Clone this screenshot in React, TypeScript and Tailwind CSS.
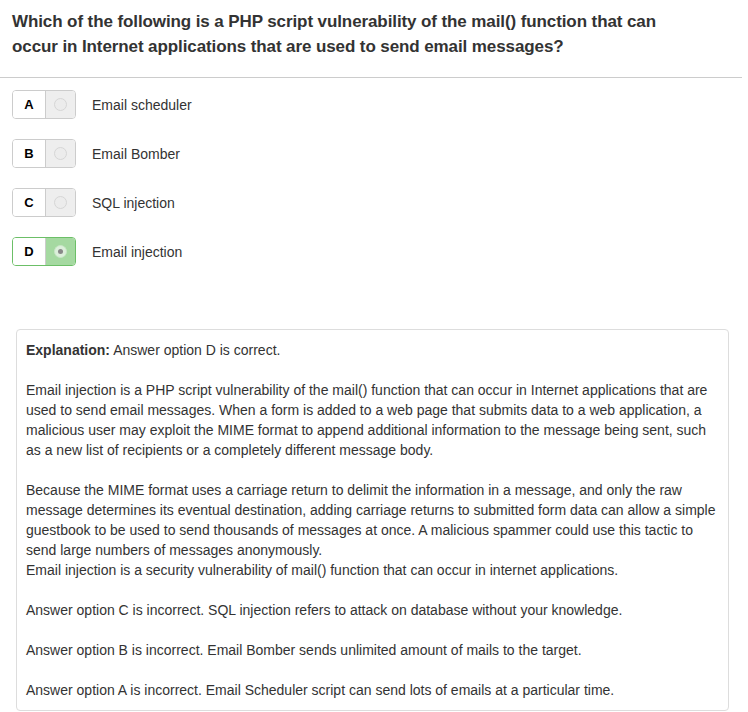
import React from "react";

const options = [
  { l: "A", t: "Email scheduler", sel: false },
  { l: "B", t: "Email Bomber", sel: false },
  { l: "C", t: "SQL injection", sel: false },
  { l: "D", t: "Email injection", sel: true },
];

export default function App() {
  return (
    <div className="w-[748px] h-[712px] bg-white text-[#333] overflow-hidden" style={{ fontFamily: '"Liberation Sans", Arial, sans-serif' }}>
      <div className="pl-[12px] pt-[9px] pr-4">
        <h4 className="text-[17px] tracking-[-0.1px] font-bold leading-[25px] text-[#333]">
          Which of the following is a PHP script vulnerability of the mail() function that can<br />occur in Internet applications that are used to send email messages?
        </h4>
      </div>
      <div className="mt-[18px] h-px w-[742px] bg-[#ccc]" />
      <div className="pl-[12px] pt-[12px] flex flex-col gap-[20px]">
        {options.map((o) => (
          <div key={o.l} className="flex items-center h-[29px]">
            <div className={`flex h-[29px] w-[64px] rounded-[4px] border ${o.sel ? "border-[#6cbf67]" : "border-[#ccc]"} overflow-hidden`}>
              <div className="w-[33px] bg-white flex items-center justify-center text-[13px] font-bold text-black border-r border-[#ccc]">
                {o.l}
              </div>
              <div className={`flex-1 flex items-center justify-center ${o.sel ? "bg-[#a5d9a1]" : "bg-[#eee]"}`}>
                <div className={`w-[13px] h-[13px] rounded-full border ${o.sel ? "border-[#c8e6c6] bg-[#dcefdb]" : "border-[#d6d6d6] bg-[#ececec]"} flex items-center justify-center`}>
                  {o.sel && <div className="w-[5px] h-[5px] rounded-full bg-[#888]" />}
                </div>
              </div>
            </div>
            <div className="ml-[16px] text-[14px] leading-[20px]">{o.t}</div>
          </div>
        ))}
      </div>
      <div className="ml-[16px] mt-[63px] w-[713px] h-[382px] border border-[#ddd] rounded-[4px] px-[9px] pt-[10px] text-[14px] leading-[20px]">
        <p><b>Explanation:</b> Answer option D is correct.</p>
        <p className="mt-[20px]">
          Email injection is a PHP script vulnerability of the mail() function that can occur in Internet applications that are used to send email messages. When a form is added to a web page that submits data to a web application, a malicious user may exploit the MIME format to append additional information to the message being sent, such as a new list of recipients or a completely different message body.
        </p>
        <p className="mt-[20px]">
          Because the MIME format uses a carriage return to delimit the information in a message, and only the raw message determines its eventual destination, adding carriage returns to submitted form data can allow a simple guestbook to be used to send thousands of messages at once. A malicious spammer could use this tactic to send large numbers of messages anonymously.
          <br />
          Email injection is a security vulnerability of mail() function that can occur in internet applications.
        </p>
        <p className="mt-[20px]">Answer option C is incorrect. SQL injection refers to attack on database without your knowledge.</p>
        <p className="mt-[20px]">Answer option B is incorrect. Email Bomber sends unlimited amount of mails to the target.</p>
        <p className="mt-[20px]">Answer option A is incorrect. Email Scheduler script can send lots of emails at a particular time.</p>
      </div>
    </div>
  );
}
